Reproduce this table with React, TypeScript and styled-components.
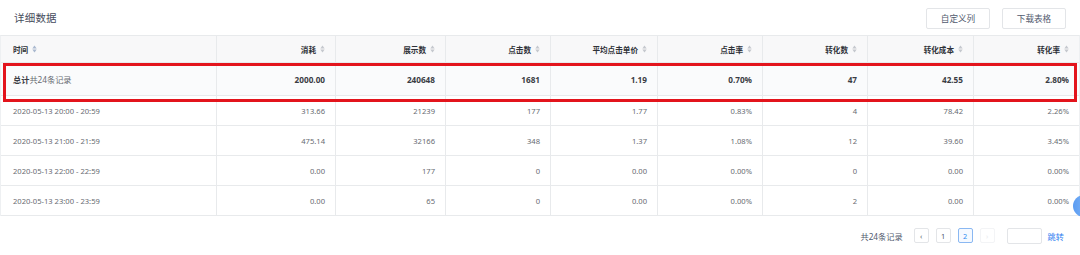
import React from "react";
import styled, { createGlobalStyle } from "styled-components";

const GlobalStyle = createGlobalStyle`
  html, body {
    margin: 0;
    padding: 0;
    background: #fff;
  }
  body {
    font-family: "Noto Sans", "Noto Sans CJK SC", sans-serif;
    color: #515a6e;
  }
`;

const Page = styled.div`
  position: relative;
  width: 1080px;
  height: 255px;
  overflow: hidden;
  background: #fff;
`;

const TopBar = styled.div`
  height: 35px;
  display: flex;
  align-items: center;
  justify-content: space-between;
  padding: 0 14px;
  box-sizing: border-box;
`;

const Title = styled.div`
  font-size: 10.5px;
  color: #464c5b;
  letter-spacing: 0.2px;
`;

const Actions = styled.div`
  display: flex;
  gap: 12px;
  padding-top: 1px;
`;

const ToolButton = styled.button`
  width: 64px;
  height: 21px;
  background: #fff;
  border: 1px solid #e3e5e8;
  border-radius: 2px;
  font-family: "Noto Sans", "Noto Sans CJK SC", sans-serif;
  font-size: 8.6px;
  color: #515a6e;
  padding: 0;
  cursor: pointer;
`;

const Table = styled.div`
  border-top: 1px solid #e8eaec;
  border-left: 1px solid #eef0f2;
  border-right: 1px solid #eef0f2;
`;

const Row = styled.div<{ $h: number; $bg?: string; $bold?: boolean }>`
  position: relative;
  display: grid;
  grid-template-columns: 216px 119px 110px 105px 107px 105px 105px 106px 1fr;
  height: ${(p) => p.$h}px;
  box-sizing: border-box;
  border-bottom: 1px solid #e8eaec;
  background: ${(p) => p.$bg || "#fff"};
  font-size: ${(p) => (p.$bold ? "8.2px" : "7.6px")};
  font-weight: ${(p) => (p.$bold ? 700 : 400)};
  color: ${(p) => (p.$bold ? "#3a3d44" : "#686b72")};
`;

const HeadRow = styled(Row)`
  font-size: 7.6px;
  font-weight: 700;
  color: #2f3238;
`;

const Marked = styled(Row)`
  z-index: 2;
  &::after {
    content: "";
    position: absolute;
    left: 2px;
    right: 2px;
    top: 0px;
    bottom: -7px;
    border: 3px solid #e3141c;
    pointer-events: none;
  }
`;

const Cell = styled.div<{ $left?: boolean }>`
  display: flex;
  align-items: center;
  justify-content: ${(p) => (p.$left ? "flex-start" : "flex-end")};
  gap: 4px;
  padding: ${(p) => (p.$left ? "0 0 0 12px" : "0 10px 0 0")};
  border-right: 1px solid #e8eaec;
  white-space: nowrap;
  &:last-child {
    border-right: none;
  }
`;

const Light = styled.span`
  font-weight: 400;
  color: #686b72;
`;

const Footer = styled.div`
  height: 39px;
  display: flex;
  align-items: center;
  justify-content: flex-end;
  padding-right: 16px;
  font-size: 8.2px;
  color: #515a6e;
`;

const Total = styled.span`
  margin-right: 11px;
`;

const Pager = styled.div`
  display: flex;
  align-items: center;
  gap: 7px;
`;

const PageItem = styled.div<{ $active?: boolean; $faded?: boolean }>`
  width: 15px;
  height: 15px;
  box-sizing: border-box;
  display: flex;
  align-items: center;
  justify-content: center;
  border: 1px solid
    ${(p) => (p.$active ? "#8ab8f2" : p.$faded ? "#f3f4f6" : "#e3e5e8")};
  border-radius: 2px;
  font-size: 7.4px;
  color: ${(p) => (p.$active ? "#2d8cf0" : p.$faded ? "#e8eaec" : "#515a6e")};
  background: ${(p) => (p.$active ? "#f5f9ff" : "#fff")};
`;

const JumpInput = styled.div`
  width: 35px;
  height: 16px;
  box-sizing: border-box;
  border: 1px solid #e3e5e8;
  border-radius: 2px;
  margin-left: 5px;
`;

const JumpLink = styled.span`
  color: #2d7ef0;
  margin-left: -1px;
`;

const FloatBall = styled.div`
  position: absolute;
  right: -15px;
  top: 195px;
  width: 22px;
  height: 22px;
  border-radius: 50%;
  z-index: 3;
  background: linear-gradient(90deg, #5b9cf2, #8fc0f8);
`;

const SortIcon = ({ color = "#c5c8ce" }: { color?: string }) => (
  <svg width="5" height="8" viewBox="0 0 5 8">
    <path d="M0.3 3.4 L2.5 0.6 L4.7 3.4 Z" fill={color} />
    <path d="M0.3 4.6 L4.7 4.6 L2.5 7.4 Z" fill={color} />
  </svg>
);

const columns = ["消耗", "展示数", "点击数", "平均点击单价", "点击率", "转化数", "转化成本", "转化率"];

const summary = ["2000.00", "240648", "1681", "1.19", "0.70%", "47", "42.55", "2.80%"];

const rows = [
  { time: "2020-05-13 20:00 - 20:59", vals: ["313.66", "21239", "177", "1.77", "0.83%", "4", "78.42", "2.26%"] },
  { time: "2020-05-13 21:00 - 21:59", vals: ["475.14", "32166", "348", "1.37", "1.08%", "12", "39.60", "3.45%"] },
  { time: "2020-05-13 22:00 - 22:59", vals: ["0.00", "177", "0", "0.00", "0.00%", "0", "0.00", "0.00%"] },
  { time: "2020-05-13 23:00 - 23:59", vals: ["0.00", "65", "0", "0.00", "0.00%", "2", "0.00", "0.00%"] },
];

const App = () => {
  return (
    <>
      <GlobalStyle />
      <Page>
        <TopBar>
          <Title>详细数据</Title>
          <Actions>
            <ToolButton>自定义列</ToolButton>
            <ToolButton>下载表格</ToolButton>
          </Actions>
        </TopBar>

        <Table>
          <HeadRow $h={27} $bg="#f8f8f9">
            <Cell $left>
              时间 <SortIcon color="#a9b8cf" />
            </Cell>
            {columns.map((c) => (
              <Cell key={c}>
                {c} <SortIcon />
              </Cell>
            ))}
          </HeadRow>

          <Marked $h={33} $bg="#fafbfc" $bold>
            <Cell $left>
              <span>
                总计<Light>共24条记录</Light>
              </span>
            </Cell>
            {summary.map((v, i) => (
              <Cell key={i}>{v}</Cell>
            ))}
          </Marked>

          {rows.map((r) => (
            <Row key={r.time} $h={30}>
              <Cell $left>{r.time}</Cell>
              {r.vals.map((v, i) => (
                <Cell key={i}>{v}</Cell>
              ))}
            </Row>
          ))}
        </Table>

        <Footer>
          <Total>共24条记录</Total>
          <Pager>
            <PageItem>‹</PageItem>
            <PageItem>1</PageItem>
            <PageItem $active>2</PageItem>
            <PageItem $faded>›</PageItem>
            <JumpInput />
            <JumpLink>跳转</JumpLink>
          </Pager>
        </Footer>

        <FloatBall />
      </Page>
    </>
  );
};

export default App;
